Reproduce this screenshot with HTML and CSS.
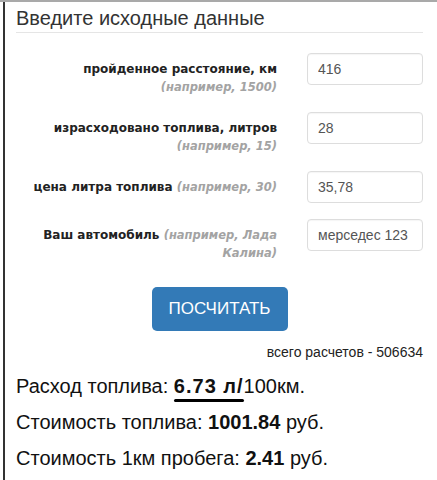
FILE: index.html
```html
<!DOCTYPE html>
<html lang="ru">
<head>
<meta charset="utf-8">
<title>Расход топлива</title>
<link rel="stylesheet" href="styles.css">
</head>
<body>
<div class="page">
  <div class="panel">
    <h2 class="title">Введите исходные данные</h2>
    <form class="form">
      <div class="row">
        <label class="label">пройденное расстояние, км <span class="hint">(например, 1500)</span></label>
        <input class="input" type="text" value="416">
      </div>
      <div class="row">
        <label class="label">израсходовано топлива, литров <span class="hint">(например, 15)</span></label>
        <input class="input" type="text" value="28">
      </div>
      <div class="row">
        <label class="label">цена литра топлива <span class="hint">(например, 30)</span></label>
        <input class="input" type="text" value="35,78">
      </div>
      <div class="row">
        <label class="label">Ваш автомобиль <span class="hint">(например, Лада Калина)</span></label>
        <input class="input" type="text" value="мерседес 123">
      </div>
      <div class="actions">
        <button class="btn" type="button">ПОСЧИТАТЬ</button>
      </div>
      <div class="counter">всего расчетов - 506634</div>
    </form>
    <div class="results">
      <p class="result">Расход топлива: <b class="mark">6.73 л/</b>100км.</p>
      <p class="result">Стоимость топлива: <b>1001.84</b> руб.</p>
      <p class="result">Стоимость 1км пробега: <b>2.41</b> руб.</p>
    </div>
  </div>
</div>
</body>
</html>
```
FILE: styles.css
```css
html, body {
  margin: 0;
  padding: 0;
  background: #fff;
}
body {
  font-family: "Liberation Sans", Arial, sans-serif;
  color: #222;
}
.page {
  border-top: 2px solid #a9a9a9;
  height: 478px;
  overflow: hidden;
}
.panel {
  margin-left: 3px;
  border-left: 2px solid #333;
  height: 100%;
  padding: 0 14px 0 11px;
}
.title {
  margin: 0;
  padding: 5px 0 3px;
  font-size: 20px;
  line-height: 22px;
  font-weight: normal;
  color: #333;
  border-bottom: 1px solid #e5e5e5;
}
.form {
  margin-top: 20px;
}
.row {
  display: grid;
  grid-template-columns: 1fr 116px;
  column-gap: 30px;
  margin-bottom: 16px;
}
.label {
  padding-top: 7px;
  text-align: right;
  font-family: "DejaVu Sans", Verdana, sans-serif;
  font-size: 12px;
  line-height: 18px;
  font-weight: bold;
  color: #222;
}
.hint {
  font-style: italic;
  color: #a3a3a3;
  font-size: 11.5px;
}
.input {
  box-sizing: border-box;
  width: 116px;
  height: 32px;
  border: 1px solid #ddd;
  border-radius: 4px;
  padding: 0 10px;
  font-family: "Liberation Sans", Arial, sans-serif;
  font-size: 14px;
  color: #555;
  background: #fff;
  box-shadow: inset 0 1px 1px rgba(0,0,0,0.04);
}
.actions {
  display: flex;
  justify-content: center;
  margin-top: 25px;
}
.btn {
  width: 136px;
  height: 44px;
  border: none;
  border-radius: 5px;
  background: #337ab7;
  color: #fff;
  font-family: "Liberation Sans", Arial, sans-serif;
  font-size: 17px;
  cursor: pointer;
}
.counter {
  text-align: right;
  font-size: 14px;
  line-height: 16px;
  margin-top: 13px;
  color: #222;
}
.results {
  margin-top: 16px;
}
.result {
  margin: 0 0 16px;
  font-size: 20px;
  line-height: 20px;
  color: #111;
}
.mark {
  position: relative;
  letter-spacing: 1px;
}
.mark::after {
  content: "";
  position: absolute;
  left: 0;
  right: 0;
  bottom: -5px;
  height: 3px;
  border-radius: 2px;
  background: #000;
}
```
